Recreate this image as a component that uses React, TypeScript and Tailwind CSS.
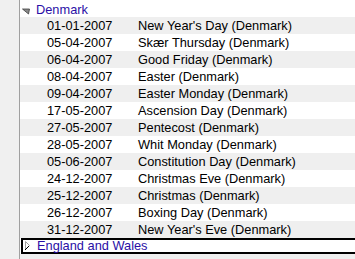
const holidays = [
  ["01-01-2007", "New Year's Day (Denmark)"],
  ["05-04-2007", "Skær Thursday (Denmark)"],
  ["06-04-2007", "Good Friday (Denmark)"],
  ["08-04-2007", "Easter (Denmark)"],
  ["09-04-2007", "Easter Monday (Denmark)"],
  ["17-05-2007", "Ascension Day (Denmark)"],
  ["27-05-2007", "Pentecost (Denmark)"],
  ["28-05-2007", "Whit Monday (Denmark)"],
  ["05-06-2007", "Constitution Day (Denmark)"],
  ["24-12-2007", "Christmas Eve (Denmark)"],
  ["25-12-2007", "Christmas (Denmark)"],
  ["26-12-2007", "Boxing Day (Denmark)"],
  ["31-12-2007", "New Year's Eve (Denmark)"],
]

function Expanded() {
  return (
    <svg width="10" height="16" viewBox="0 0 10 16" className="shrink-0">
      <polygon points="1.5,8 8.5,8 7.5,13" fill="#8a8a8a" stroke="#3c3c3c" strokeWidth="0.8" />
    </svg>
  )
}

function Collapsed() {
  return (
    <svg width="10" height="12" viewBox="0 0 10 12" className="shrink-0">
      <polygon points="2.5,1.5 6.5,5.5 2.5,9.5" fill="#ffffff" stroke="#a0a0a0" strokeWidth="1" />
      <line x1="2" y1="10" x2="6" y2="6" stroke="#000" strokeWidth="1" />
    </svg>
  )
}

export default function App() {
  return (
    <div
      className="flex w-[355px] h-[259px] overflow-hidden bg-white text-[12.8px] text-black"
      style={{ fontFamily: '"Liberation Sans", Arial, sans-serif' }}
    >
      <div className="w-[20px] shrink-0 bg-[#f0f0f0] border-r border-[#a0a0a0]" />
      <div className="flex flex-col flex-1 min-w-0">
        <div className="flex shrink-0 items-center h-[17px] pl-[1px]">
          <Expanded />
          <span className="ml-[5px] pt-[3px] text-[#2a0fa6] leading-none">Denmark</span>
        </div>
        {holidays.map(([date, name], i) => (
          <div
            key={date}
            className={`flex shrink-0 items-center h-[17px] pt-px leading-none whitespace-nowrap ${i % 2 === 0 ? "bg-[#efefef]" : "bg-white"}`}
          >
            <span className="w-[91px] pl-[27px] shrink-0 box-content">{date}</span>
            <span>{name}</span>
          </div>
        ))}
        <div className="flex shrink-0 items-center h-[16px] w-[400px] ml-[1px] border-2 border-black bg-white">
          <Collapsed />
          <span className="ml-[4px] pt-px text-[#2a0fa6] leading-none">England and Wales</span>
        </div>
        <div className="h-[20px] shrink-0 bg-[#efefef]" />
      </div>
    </div>
  )
}
